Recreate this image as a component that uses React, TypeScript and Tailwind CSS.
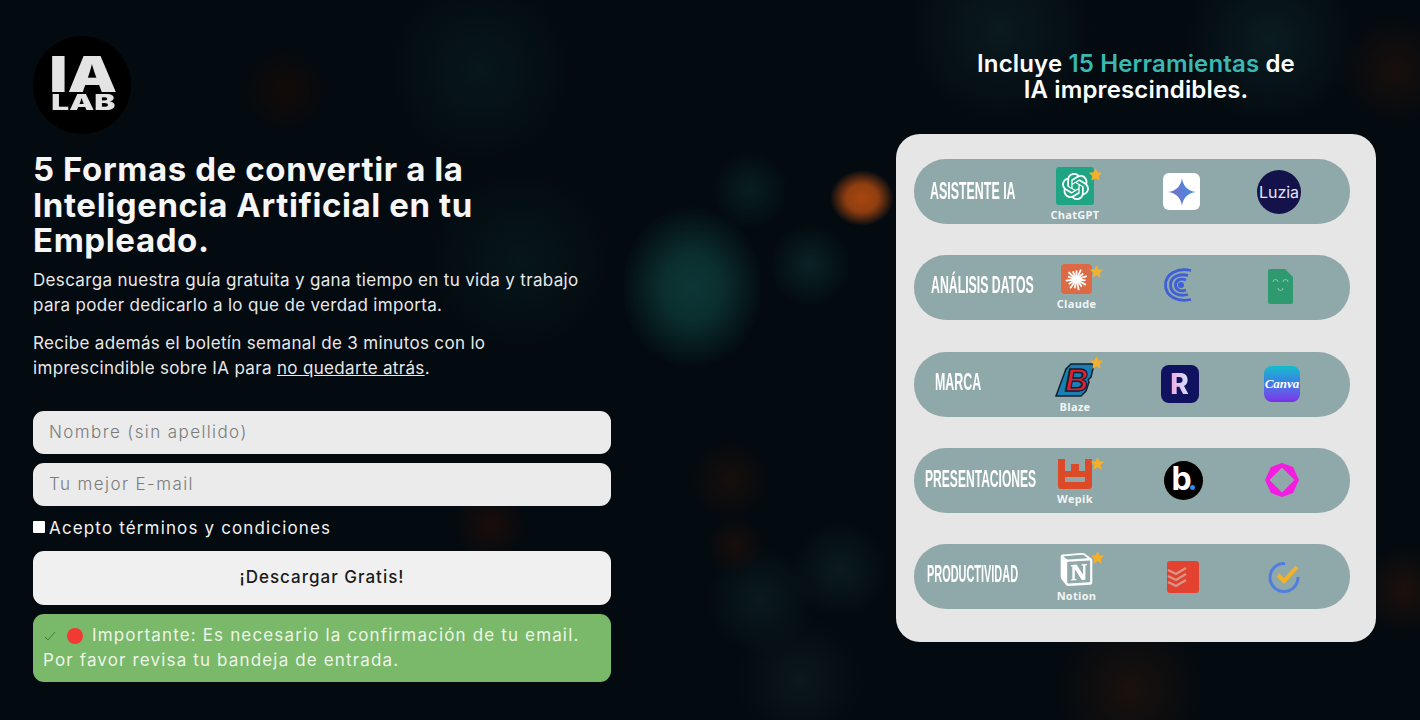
import React from 'react';
import { SiOpenai, SiNotion } from 'react-icons/si';

const sans = 'font-["Inter","Open_Sans",sans-serif]';

function Star({ className }: { className: string }) {
  return (
    <svg viewBox="0 0 24 24" className={`absolute w-[15px] h-[15px] ${className}`}>
      <path d="M12 1.5l3.2 6.9 7.5.9-5.5 5.1 1.5 7.4L12 18.1l-6.7 3.7 1.5-7.4L1.3 9.3l7.5-.9z" fill="#f2b02c" />
    </svg>
  );
}

function ChatGPT() {
  return (
    <div className="w-[38px] h-[38px] rounded-[3px] bg-[#1fa583] flex items-center justify-center">
      <SiOpenai className="w-[27px] h-[27px] text-white" />
    </div>
  );
}

function Gemini() {
  return (
    <div className="w-[37px] h-[37px] rounded-[6px] bg-white flex items-center justify-center">
      <svg viewBox="0 0 24 24" className="w-[28px] h-[28px]">
        <defs>
          <linearGradient id="gem" x1="0" y1="0.6" x2="1" y2="0.4">
            <stop offset="0" stopColor="#7d6cc4" />
            <stop offset="1" stopColor="#3f8de8" />
          </linearGradient>
        </defs>
        <path d="M12 0c.8 6.6 4.600 11 12 12-7.400 1-11.200 5.400-12 12-.8-6.600-4.600-11-12-12 7.400-1 11.200-5.400 12-12z" fill="url(#gem)" />
      </svg>
    </div>
  );
}

function Luzia() {
  return (
    <div className={`w-[44px] h-[44px] rounded-full bg-[#14124a] flex items-center justify-center text-[16px] text-[#e4e4f8] ${sans}`}>
      Luzia
    </div>
  );
}

function Claude() {
  const rays = [0, 24, 48, 72, 96, 120, 144, 168, 192, 216, 240, 264, 288, 312, 336];
  return (
    <div className="w-[31px] h-[30px] rounded-[4px] bg-[#dc6a44] flex items-center justify-center">
      <svg viewBox="0 0 30 30" className="w-[27px] h-[27px]">
        {rays.map((r, i) => (
          <line key={r} x1="15" y1="15" x2="15" y2={i % 2 ? 3 : 5} stroke="#fff" strokeWidth="2" transform={`rotate(${r} 15 15)`} />
        ))}
      </svg>
    </div>
  );
}

function Coda() {
  return (
    <svg viewBox="0 0 28 34" className="w-[28px] h-[34px]" fill="none" stroke="#3f5fd8" strokeWidth="2.800">
      <path d="M27 2.500C13 -0.500 1.500 6 1.500 17S13 34.500 27 31.500" />
      <path d="M24 7.500C14 5 6.500 9.500 6.500 17s7.500 12 17.500 9.500" />
      <path d="M22 12C16.500 10 11.500 12 11.500 17s5 7 10.500 5" />
      <circle cx="17" cy="17" r="1.600" />
    </svg>
  );
}

function SheetDoc() {
  return (
    <svg viewBox="0 0 25 35" className="w-[25px] h-[35px]">
      <path d="M2 0h15l8 8v25a2 2 0 0 1-2 2H2a2 2 0 0 1-2-2V2a2 2 0 0 1 2-2z" fill="#2f9a70" />
      <path d="M5 13a2.500 2.500 0 0 1 5 0M15 13a2.500 2.500 0 0 1 5 0M10 19a2.500 2.500 0 0 0 5 0" fill="none" stroke="#8fc9ae" strokeWidth="1" />
    </svg>
  );
}

function Blaze() {
  return (
    <svg viewBox="0 0 40 34" className="w-[40px] h-[34px] overflow-visible">
      <path d="M1 33L11 6l5-5h23l-3 13-3 3 1 2-3 9-5 5z" fill="#1a7fb5" stroke="#13202e" strokeWidth="1.500" />
      <text
        x="10"
        y="28"
        fontSize="32"
        fontWeight="900"
        fontStyle="italic"
        fontFamily="Liberation Sans, sans-serif"
        fill="#e51f2f"
        stroke="#13202e"
        strokeWidth="1.500"
      >
        B
      </text>
    </svg>
  );
}

function RApp() {
  return (
    <div className={`w-[38px] h-[38px] rounded-[8px] bg-[#11125f] flex items-center justify-center text-[28px] leading-none font-extrabold ${sans}`}>
      <span className="bg-gradient-to-r from-[#f0a8e0] to-[#cfe0ff] bg-clip-text text-transparent">R</span>
    </div>
  );
}

function Canva() {
  return (
    <div className="w-[36px] h-[36px] rounded-[8px] bg-gradient-to-b from-[#0fbcc9] via-[#3b78e6] to-[#7a2de8] flex items-center justify-center text-[13px] italic font-bold font-['Liberation_Serif',serif] text-white">
      Canva
    </div>
  );
}

function Wepik() {
  return (
    <svg viewBox="0 0 34 30" className="w-[34px] h-[30px]">
      <path d="M0 0h7v12h6V5h8v7h6V0h7v27a3 3 0 0 1-3 3H3a3 3 0 0 1-3-3z M7 18v5h20v-5z" fill="#dc4a27" fillRule="evenodd" />
    </svg>
  );
}

function Beautiful() {
  return (
    <div className={`relative w-[39px] h-[39px] rounded-full bg-black flex items-center justify-center text-[32px] leading-none font-bold text-white ${sans}`}>
      <span className="-mt-[3px] -ml-[3px]">b</span>
      <span className="absolute right-[8px] bottom-[10px] w-[5px] h-[5px] rounded-full bg-[#2a8cf0]" />
    </div>
  );
}

function Hexa() {
  return (
    <svg viewBox="0 0 34 34" className="w-[34px] h-[34px]">
      <path d="M17 0l11 4 6 13-6 13-11 4-11-4-6-13 6-13zM17 4.500L4.500 17 17 29.500 29.500 17z" fill="#f41ce0" fillRule="evenodd" />
    </svg>
  );
}

function Notion() {
  return <SiNotion className="w-[33px] h-[33px] text-white" />;
}

function Todoist() {
  return (
    <svg viewBox="0 0 32 32" className="w-[32px] h-[32px]">
      <rect width="32" height="32" rx="3" fill="#e2422f" />
      <path d="M1 9l8 4 10-6M1 15l8 4 10-6M1 21l8 4 10-6" fill="none" stroke="#d7958a" strokeWidth="2.400" />
    </svg>
  );
}

function TickTick() {
  return (
    <svg viewBox="0 0 32 32" className="w-[32px] h-[32px]" fill="none">
      <path d="M17 2.500A14 14 0 1 0 30 16" stroke="#4f7ee0" strokeWidth="3" />
      <path d="M10 14l6 6L29 6" stroke="#f5b324" strokeWidth="4" />
    </svg>
  );
}

const rows = [
  {
    label: 'ASISTENTE IA',
    labelWrap: 'pl-[16px]',
    labelClass: 'scale-x-[0.54]',
    name: 'ChatGPT',
    main: <ChatGPT />,
    top: 'mt-[8px]',
    star: 'left-[32px] top-[0px]',
    a: <Gemini />,
    aClass: 'pr-[3px]',
    b: <Luzia />,
    bClass: '',
  },
  {
    label: 'ANÁLISIS DATOS',
    labelWrap: 'pl-[17px] mb-[5px]',
    labelClass: 'scale-x-[0.535]',
    name: 'Claude',
    main: <Claude />,
    top: 'mt-[9px] ml-[3px]',
    star: 'left-[28px] top-[0px]',
    a: <Coda />,
    aClass: 'pr-[10px] mb-[6px]',
    b: <SheetDoc />,
    bClass: 'pl-[2px] mb-[3px]',
  },
  {
    label: 'MARCA',
    labelWrap: 'pl-[21px] mb-[4px]',
    labelClass: 'scale-x-[0.54]',
    name: 'Blaze',
    main: <Blaze />,
    top: 'mt-[11px]',
    star: 'left-[34px] -top-[8px]',
    a: <RApp />,
    aClass: 'pr-[7px]',
    b: <Canva />,
    bClass: 'pl-[6px]',
  },
  {
    label: 'PRESENTACIONES',
    labelWrap: 'pl-[11px] mb-[2px]',
    labelClass: 'scale-x-[0.525]',
    name: 'Wepik',
    main: <Wepik />,
    top: 'mt-[11px]',
    star: 'left-[32px] -top-[3px]',
    a: <Beautiful />,
    aClass: '',
    b: <Hexa />,
    bClass: 'pl-[6px]',
  },
  {
    label: 'PRODUCTIVIDAD',
    labelWrap: 'pl-[13px] mb-[4px]',
    labelClass: 'scale-x-[0.475]',
    name: 'Notion',
    main: <Notion />,
    top: 'mt-[9px] ml-[3px]',
    star: 'left-[30px] -top-[3px]',
    a: <Todoist />,
    aClass: '',
    b: <TickTick />,
    bClass: 'pl-[10px]',
  },
];

export default function App() {
  return (
    <div
      className={`h-[720px] w-[1420px] overflow-hidden flex bg-[#030a10] text-white ${sans} bg-[radial-gradient(ellipse_72px_82px_at_692px_287px,#0d3636_0,#0b2e2e_40%,transparent_100%),radial-gradient(ellipse_32px_28px_at_862px_198px,#a8470f_0,#8f3e10_50%,transparent_100%),radial-gradient(circle_at_810px_265px,#0a2326_0,transparent_42px),radial-gradient(circle_at_750px_190px,#081e21_0,transparent_40px),radial-gradient(circle_at_285px_90px,#140a08_0,transparent_45px),radial-gradient(circle_at_490px_525px,#1a0d0a_0,transparent_38px),radial-gradient(circle_at_730px_480px,#170e0b_0,transparent_42px),radial-gradient(circle_at_735px_545px,#190e0b_0,transparent_30px),radial-gradient(circle_at_760px_600px,#0a1a1e_0,transparent_56px),radial-gradient(circle_at_840px_570px,#0b1b20_0,transparent_50px),radial-gradient(circle_at_800px_680px,#0b171b_0,transparent_66px),radial-gradient(circle_at_1270px_40px,#0a1c20_0,transparent_90px),radial-gradient(circle_at_1395px_70px,#190f0c_0,transparent_56px),radial-gradient(circle_at_1405px_590px,#1d100c_0,transparent_46px),radial-gradient(circle_at_1130px_690px,#1a110d_0,transparent_76px),radial-gradient(circle_at_1000px_30px,#0a1a1e_0,transparent_100px),radial-gradient(circle_at_480px_70px,#07171a_0,transparent_100px),radial-gradient(circle_at_520px_260px,#061619_0,transparent_100px)]`}
    >
      <div className="w-[644px] pl-[33px] pt-[36px] shrink-0">
        {/* Logo */}
        <div className="w-[98px] h-[98px] rounded-full bg-black flex flex-col items-center pt-[19px] pl-[3px] font-black text-[#e4e4e4]">
          <span className="text-[50px] leading-[38px] scale-x-[1.25]">IA</span>
          <span className="text-[21px] leading-[16px] mt-[2px] scale-x-[1.5]">LAB</span>
        </div>

        <h1 className="mt-[18px] w-[480px] text-[33px] leading-[35.6px] tracking-[0.6px] font-bold text-[#f6f6f6]">
          5 Formas de convertir a la Inteligencia Artificial en tu Empleado.
        </h1>

        <div className="mt-[9px] w-[578px] text-[17px] leading-[25px] tracking-[0.33px] text-[#e8e8e8]">
          <p>
            Descarga nuestra guía gratuita y gana tiempo en tu vida y trabajo
            <br />
            para poder dedicarlo a lo que de verdad importa.
          </p>
          <p className="mt-[13px]">
            Recibe además el boletín semanal de 3 minutos con lo
            <br />
            imprescindible sobre IA para <span className="underline">no quedarte atrás</span>.
          </p>
        </div>

        <form className="mt-[30px] w-[578px] flex flex-col">
          <input
            placeholder="Nombre (sin apellido)"
            className="h-[43px] rounded-[11px] bg-[#ebebeb] px-[16px] text-[17px] tracking-[1.4px] font-light placeholder:text-[#7b7b7b] outline-none"
          />
          <input
            placeholder="Tu mejor E-mail"
            className="mt-[9px] h-[43px] rounded-[11px] bg-[#ebebeb] px-[16px] text-[17px] tracking-[1.4px] font-light placeholder:text-[#7b7b7b] outline-none"
          />
          <label className="mt-[11px] h-[24px] flex items-center text-[17px] tracking-[1.15px] text-[#f2f2f2]">
            <input type="checkbox" className="appearance-none w-[12px] h-[12px] -mt-[4px] mr-[4px] bg-white rounded-[1px]" />
            Acepto términos y condiciones
          </label>
          <button type="button" className="mt-[10px] h-[54px] rounded-[11px] bg-[#f0f0f0] text-[17px] font-medium tracking-[1px] text-[#1a1a1a]">
            ¡Descargar Gratis!
          </button>
          <div className="mt-[9px] h-[68px] rounded-[11px] bg-[#7ab86a] pl-[10px] pr-[8px] py-[9px] text-[17px] leading-[25px] tracking-[1.15px] text-[#edf5e8] whitespace-nowrap">
            <span className="inline-flex items-center align-[-2px] mr-[9px] gap-[10px]">
              <svg viewBox="0 0 14 14" className="w-[14px] h-[14px]" fill="none" stroke="#2f8a38" strokeWidth="1">
                <path d="M2 8l3 3 7-8" />
              </svg>
              <span className="w-[16px] h-[16px] rounded-full bg-[#f23a35]" />
            </span>
            Importante: Es necesario la confirmación de tu email.
            <br />
            Por favor revisa tu bandeja de entrada.
          </div>
        </form>
      </div>

      <div className="flex-1 pl-[252px]">
        <div className="w-[480px] pt-[51px]">
          <h2 className="text-center text-[24px] leading-[26px] tracking-[0.15px] font-semibold">
            Incluye <span className="text-[#39b8b4]">15 Herramientas</span> de
            <br />
            IA imprescindibles.
          </h2>

          <div className="mt-[31px] h-[508px] rounded-[24px] bg-[#e6e6e6] pl-[18px] pt-[25px] flex flex-col gap-[31.25px]">
            {rows.map((row) => (
              <div key={row.name} className="w-[436px] h-[65px] rounded-[32px] bg-[#8fa8aa] grid grid-cols-[107px_108px_108px_84px] items-center">
                <div className={row.labelWrap}>
                  <div className={`origin-left whitespace-nowrap text-[23px] font-bold font-['Liberation_Sans',sans-serif] text-white ${row.labelClass}`}>
                    {row.label}
                  </div>
                </div>
                <div className={`self-start flex flex-col items-center ${row.top}`}>
                  <div className="relative">
                    {row.main}
                    <Star className={row.star} />
                  </div>
                  <span className="mt-[4px] text-[11px] leading-[12px] font-bold tracking-[0.3px] font-['Open_Sans',sans-serif] text-[#f2f5f5]">
                    {row.name}
                  </span>
                </div>
                <div className={`flex justify-center ${row.aClass}`}>{row.a}</div>
                <div className={`flex justify-center ${row.bClass}`}>{row.b}</div>
              </div>
            ))}
          </div>
        </div>
      </div>
    </div>
  );
}
